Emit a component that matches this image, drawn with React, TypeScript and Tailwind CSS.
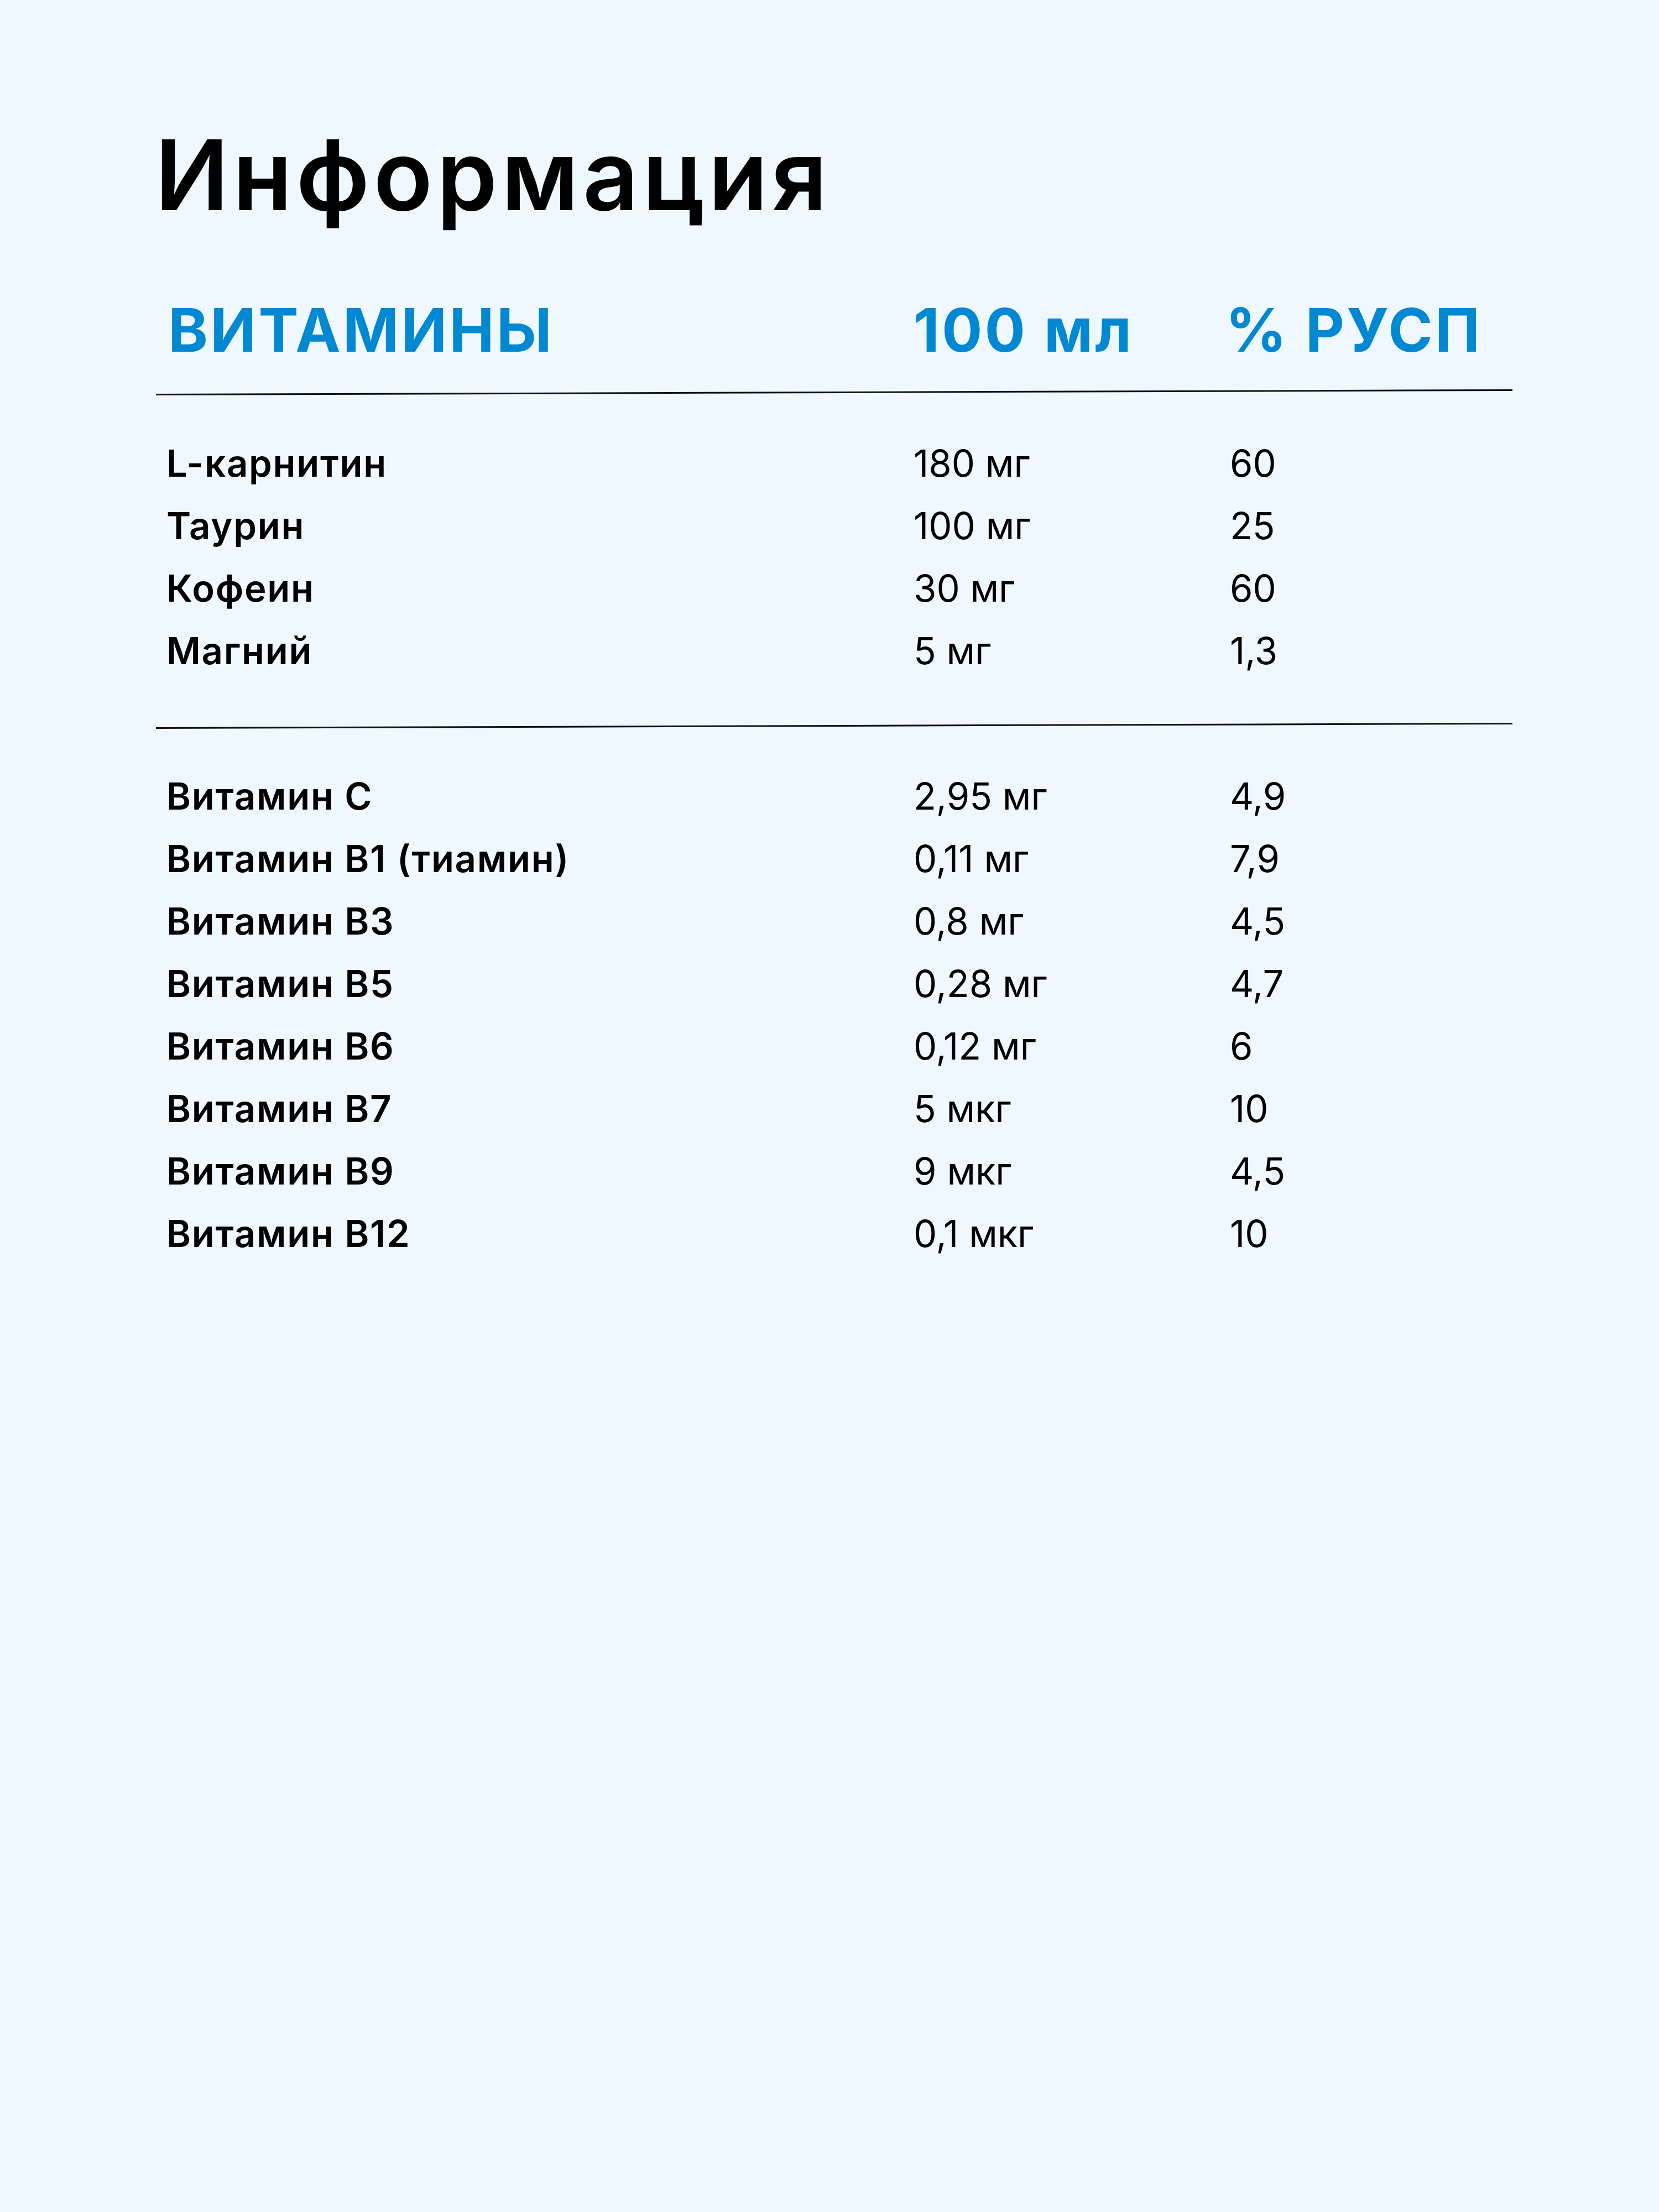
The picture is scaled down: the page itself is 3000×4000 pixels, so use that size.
import React from "react";

const groupOne = [
  { name: "L-карнитин", amount: "180 мг", pct: "60" },
  { name: "Таурин", amount: "100 мг", pct: "25" },
  { name: "Кофеин", amount: "30 мг", pct: "60" },
  { name: "Магний", amount: "5 мг", pct: "1,3" },
];

const groupTwo = [
  { name: "Витамин С", amount: "2,95 мг", pct: "4,9" },
  { name: "Витамин В1 (тиамин)", amount: "0,11 мг", pct: "7,9" },
  { name: "Витамин В3", amount: "0,8 мг", pct: "4,5" },
  { name: "Витамин В5", amount: "0,28 мг", pct: "4,7" },
  { name: "Витамин В6", amount: "0,12 мг", pct: "6" },
  { name: "Витамин В7", amount: "5 мкг", pct: "10" },
  { name: "Витамин В9", amount: "9 мкг", pct: "4,5" },
  { name: "Витамин В12", amount: "0,1 мкг", pct: "10" },
];

type Row = { name: string; amount: string; pct: string };

const Rows: React.FC<{ rows: Row[] }> = ({ rows }) => (
  <div className="flex flex-col">
    {rows.map((r) => (
      <div key={r.name} className="flex text-[67px] leading-[113px] text-black">
        <div className="w-[1370px] pl-[19px] font-semibold tracking-[1.7px]">{r.name}</div>
        <div className="w-[572px] font-normal">{r.amount}</div>
        <div className="flex-1 font-normal">{r.pct}</div>
      </div>
    ))}
  </div>
);

const Divider: React.FC = () => (
  <div className="h-[3px] w-full bg-[#111111] -rotate-[0.19deg]" />
);

const App: React.FC = () => {
  return (
    <div
      className="w-[3000px] h-[4000px] bg-[#f0f8ff] pl-[282px] pr-[265px] pt-[228px]"
      style={{ fontFamily: "Inter, 'Noto Sans', sans-serif" }}
    >
      <h1 className="-ml-[2px] text-[176px] leading-none font-semibold text-black tracking-[7px]">
        Информация
      </h1>

      <div className="mt-[138px] flex text-[109px] leading-none font-bold text-[#0088d2] tracking-[4px]">
        <div className="w-[1370px] pl-[22px]">ВИТАМИНЫ</div>
        <div className="w-[572px]">100 мл</div>
        <div className="flex-1 -ml-[8px]">% РУСП</div>
      </div>

      <div className="mt-[57px]">
        <Divider />
      </div>

      <div className="mt-[70px]">
        <Rows rows={groupOne} />
      </div>

      <div className="mt-[78px]">
        <Divider />
      </div>

      <div className="mt-[69px]">
        <Rows rows={groupTwo} />
      </div>
    </div>
  );
};

export default App;
